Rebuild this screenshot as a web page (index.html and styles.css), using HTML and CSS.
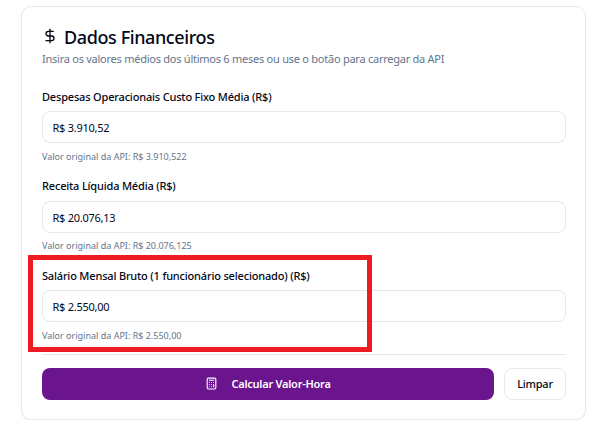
FILE: index.html
```html
<!DOCTYPE html>
<html lang="pt-BR">
<head>
  <meta charset="UTF-8">
  <meta name="viewport" content="width=device-width, initial-scale=1.0">
  <title>Dados Financeiros</title>
  <link rel="stylesheet" href="styles.css">
</head>
<body>
  <div class="card">
    <div class="card-header">
      <h1 class="title">
        <svg class="icon-dollar" viewBox="0 0 24 24" fill="none" stroke="currentColor" stroke-width="2" stroke-linecap="round" stroke-linejoin="round">
          <line x1="12" x2="12" y1="2" y2="22"/>
          <path d="M17 5H9.5a3.5 3.5 0 0 0 0 7h5a3.5 3.5 0 0 1 0 7H6"/>
        </svg>
        <span>Dados Financeiros</span>
      </h1>
      <p class="description">Insira os valores médios dos últimos 6 meses ou use o botão para carregar da API</p>
    </div>

    <form class="form">
      <div class="field">
        <label for="despesas">Despesas Operacionais Custo Fixo Média (R$)</label>
        <input type="text" id="despesas" value="R$ 3.910,52">
        <p class="hint">Valor original da API: R$ 3.910,522</p>
      </div>
      <div class="field">
        <label for="receita">Receita Líquida Média (R$)</label>
        <input type="text" id="receita" value="R$ 20.076,13">
        <p class="hint">Valor original da API: R$ 20.076,125</p>
      </div>
      <div class="field">
        <label for="salario">Salário Mensal Bruto (1 funcionário selecionado) (R$)</label>
        <input type="text" id="salario" value="R$ 2.550,00">
        <p class="hint">Valor original da API: R$ 2.550,00</p>
        <div class="highlight"></div>
      </div>

      <div class="actions">
        <button type="button" class="btn btn-primary">
          <svg class="icon-calc" viewBox="0 0 24 24" fill="none" stroke="currentColor" stroke-width="2" stroke-linecap="round" stroke-linejoin="round">
            <rect width="16" height="20" x="4" y="2" rx="2"/>
            <line x1="8" x2="16" y1="6" y2="6"/>
            <line x1="16" x2="16" y1="14" y2="18"/>
            <path d="M16 10h.01M12 10h.01M8 10h.01M12 14h.01M8 14h.01M12 18h.01M8 18h.01"/>
          </svg>
          <span>Calcular Valor-Hora</span>
        </button>
        <button type="button" class="btn btn-outline">Limpar</button>
      </div>
    </form>
  </div>
</body>
</html>
```
FILE: styles.css
```css
* {
  box-sizing: border-box;
}
body {
  margin: 0;
  padding: 6px 7px 0 21px;
  background: #fff;
  color: #020817;
  font-family: "Noto Sans", "Open Sans", sans-serif;
  overflow: hidden;
}
.card {
  height: 414px;
  padding: 18px 19px 0 20px;
  border: 1px solid #e2e8f0;
  border-radius: 10px;
  box-shadow: 0 1px 2px rgba(0,0,0,0.06);
}
.title {
  display: flex;
  align-items: center;
  gap: 6px;
  height: 24px;
  margin: 0;
  font-size: 18px;
  font-weight: 500;
  letter-spacing: -0.4px;
  white-space: nowrap;
}
.icon-dollar {
  width: 16px;
  height: 16px;
  margin-top: -3px;
}
.description {
  height: 18px;
  margin: 0;
  color: #64748b;
  font-size: 11px;
  line-height: 20px;
  letter-spacing: -0.25px;
  white-space: nowrap;
}
.form {
  padding-top: 20px;
}
.field {
  position: relative;
  height: 89.3px;
}
.field label {
  display: block;
  height: 24.4px;
  font-size: 11px;
  font-weight: 500;
  line-height: 20px;
  letter-spacing: -0.18px;
  white-space: nowrap;
}
.field input {
  display: block;
  width: 100%;
  height: 32px;
  padding: 1px 9.5px 0;
  border: 1px solid #e2e8f0;
  border-radius: 8px;
  background: #fff;
  color: #020817;
  font-family: inherit;
  font-size: 11px;
  letter-spacing: -0.27px;
  outline: none;
}
.hint {
  margin: 5.6px 0 0;
  color: #64748b;
  font-size: 9px;
  line-height: 16px;
}
.highlight {
  position: absolute;
  top: -11px;
  left: -14px;
  width: 344px;
  height: 97px;
  border: 5px solid #ed1c24;
  pointer-events: none;
}
.actions {
  display: flex;
  gap: 10px;
  margin-top: -1px;
  padding-top: 13px;
  border-top: 1px solid #e2e8f0;
}
.btn {
  display: flex;
  align-items: center;
  justify-content: center;
  height: 32px;
  padding: 0;
  border: none;
  border-radius: 8px;
  font-family: inherit;
  font-size: 11px;
  letter-spacing: -0.24px;
  white-space: nowrap;
}
.btn-primary {
  flex: 1;
  gap: 13px;
  background: #6a148e;
  color: #fff;
  font-weight: 600;
}
.btn-outline {
  width: 62px;
  border: 1px solid #e2e8f0;
  background: #fff;
  color: #020817;
  font-weight: 500;
}
.icon-calc {
  width: 13px;
  height: 13px;
}
```
